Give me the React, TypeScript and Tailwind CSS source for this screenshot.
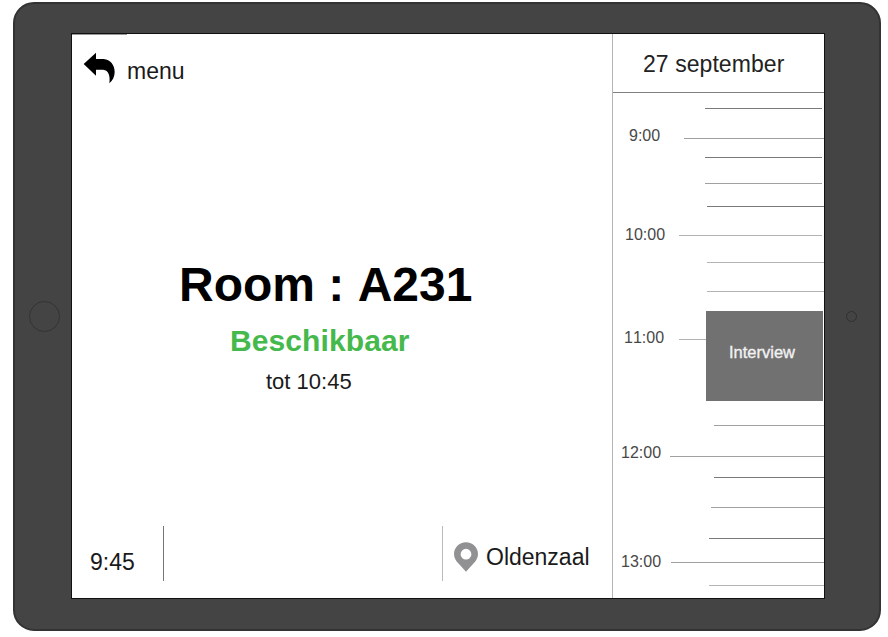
type Tick = { gap: string; inset: string; tone: string };

const TONE_DARK = "bg-[#7a7a7a]";
const TONE_MID = "bg-[#a0a0a0]";
const TONE_LIGHT = "bg-[#b4b4b4]";

const ticksBefore: Tick[] = [
  { gap: "mt-[15px]", inset: "ml-[92px] mr-[2px]", tone: TONE_DARK },
  { gap: "mt-[29px]", inset: "ml-[71px]", tone: TONE_MID },
  { gap: "mt-[18px]", inset: "ml-[92px] mr-[2px]", tone: TONE_DARK },
  { gap: "mt-[25px]", inset: "ml-[92px] mr-[2px]", tone: TONE_MID },
  { gap: "mt-[22px]", inset: "ml-[94px]", tone: TONE_DARK },
  { gap: "mt-[28px]", inset: "ml-[66px] mr-[2px]", tone: TONE_LIGHT },
  { gap: "mt-[26px]", inset: "ml-[94px]", tone: TONE_LIGHT },
  { gap: "mt-[28px]", inset: "ml-[94px]", tone: TONE_LIGHT },
];

const ticksAfter: Tick[] = [
  { gap: "mt-[24px]", inset: "ml-[101px]", tone: TONE_MID },
  { gap: "mt-[30px]", inset: "ml-[57px]", tone: TONE_MID },
  { gap: "mt-[20px]", inset: "ml-[101px]", tone: TONE_DARK },
  { gap: "mt-[29px]", inset: "ml-[98px]", tone: TONE_MID },
  { gap: "mt-[30px]", inset: "ml-[96px]", tone: TONE_DARK },
  { gap: "mt-[23px]", inset: "ml-[58px]", tone: TONE_MID },
  { gap: "mt-[22px]", inset: "ml-[96px]", tone: TONE_LIGHT },
];

const hours = [
  { label: "9:00", place: "mt-[35px] ml-[16px]" },
  { label: "10:00", place: "mt-[83px] ml-[12px]" },
  { label: "11:00", place: "mt-[87px] ml-[11px]" },
  { label: "12:00", place: "mt-[99px] ml-[8px]" },
  { label: "13:00", place: "mt-[93px] ml-[8px]" },
];

function TickLine({ tick }: { tick: Tick }) {
  return <div className={`h-px shrink-0 ${tick.gap} ${tick.inset} ${tick.tone}`} />;
}

function BackArrow() {
  return (
    <svg viewBox="0 0 96 96" className="h-8 w-8 shrink-0">
      <path d="M2 36 L39 2 V21 H62 C82 23 95 39 95 60 C95 74 89 86 79 94 C82 74 78 54 60 53 H39 V71 Z" />
    </svg>
  );
}

function Pin() {
  return (
    <svg viewBox="0 0 24 30" className="h-[30px] w-6 shrink-0">
      <path
        fill="#919194"
        fillRule="evenodd"
        d="M12 .3C5.200 .3 0 5.500 0 12c0 4 2 7 4.800 9.800L12 29.800l7.200-8C22 19 24 16 24 12 24 5.500 18.800 .3 12 .3Zm0 6.500a5.400 5.400 0 1 1 0 10.800 5.400 5.400 0 0 1 0-10.800Z"
      />
    </svg>
  );
}

function RoomPanel() {
  return (
    <main className="flex w-[540px] shrink-0 flex-col">
      <div className="h-px w-[55px] bg-[#999]" />
      <header className="mt-[17px] ml-[11px] flex h-8 items-start">
        <BackArrow />
        <span className="mt-2 ml-3 text-[23px] leading-none">menu</span>
      </header>
      <section className="mt-[177px] flex flex-1 flex-col leading-none">
        <h1 className="ml-[107px] text-[48px] leading-none font-bold text-black">Room : A231</h1>
        <p className="mt-[17px] ml-[158px] text-[30px] leading-none font-bold tracking-[0.1px] text-[#45b94c]">
          Beschikbaar
        </p>
        <p className="mt-[15px] ml-[194px] text-[22px] leading-none">tot 10:45</p>
      </section>
      <footer className="mb-[17px] flex h-[55px] text-[23px] leading-none">
        <div className="w-[91px] pt-[25px] pl-[18px]">9:45</div>
        <div className="w-px bg-[#777]" />
        <div className="w-[278px]" />
        <div className="w-px bg-[#bbb]" />
        <div className="flex pt-[16px] pl-[11px]">
          <Pin />
          <span className="mt-[4px] ml-2">Oldenzaal</span>
        </div>
      </footer>
    </main>
  );
}

function Agenda() {
  return (
    <aside className="flex flex-1 flex-col border-l border-[#b5b5b5]">
      <h2 className="h-[59px] border-b border-[#808080] pt-[19px] pl-[30px] text-[23px] leading-none tracking-[0.06px] whitespace-nowrap text-[#222]">
        27 september
      </h2>
      <div className="grid flex-1 grid-cols-1 grid-rows-1">
        <div className="col-start-1 row-start-1 flex flex-col text-[16px] leading-none text-[#484848]">
          {hours.map((hour) => (
            <span key={hour.label} className={hour.place}>
              {hour.label}
            </span>
          ))}
        </div>
        <div className="col-start-1 row-start-1 flex flex-col">
          {ticksBefore.map((tick, i) => (
            <TickLine key={i} tick={tick} />
          ))}
          <div className="mt-[19px] mr-px flex h-[90px]">
            <div className="mt-[28px] ml-[66px] h-px w-[27px] bg-[#b4b4b4]" />
            <div className="flex-1 bg-[#717171] pt-[33px] pl-[23px] text-[16.5px] leading-none text-[#f2f2f2] [-webkit-text-stroke:0.35px_#f2f2f2]">
              Interview
            </div>
          </div>
          {ticksAfter.map((tick, i) => (
            <TickLine key={i} tick={tick} />
          ))}
        </div>
      </div>
    </aside>
  );
}

export default function App() {
  return (
    <div className="h-[637px] w-[888px] overflow-hidden bg-white pt-[2px] pl-[13px] font-['Liberation_Sans',Arial,sans-serif] text-[#1a1a1a] [font-kerning:none]">
      <div className="flex h-[629px] w-[868px] items-start rounded-[21px] border-2 border-[#333] bg-[#444]">
        <div className="mt-[297px] ml-[14px] h-[31px] w-[31px] rounded-full border border-[#333]" />
        <div className="mt-[29px] ml-[11px] flex h-[566px] w-[754px] border border-[#111] bg-white">
          <RoomPanel />
          <Agenda />
        </div>
        <div className="mt-[307px] ml-[21px] h-[11px] w-[11px] rounded-full border border-[#303030]" />
      </div>
    </div>
  );
}
